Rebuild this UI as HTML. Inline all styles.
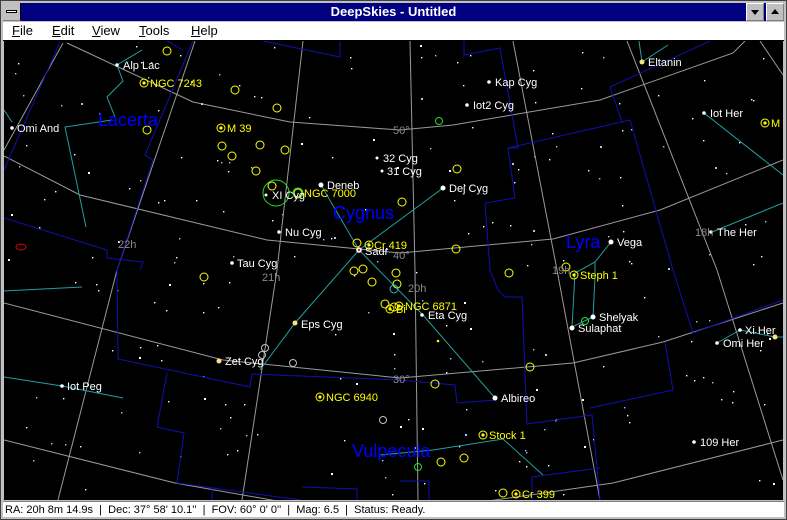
<!DOCTYPE html>
<html><head><meta charset="utf-8"><style>
*{margin:0;padding:0}
body{width:787px;height:520px;overflow:hidden;background:#c0c0c0;font-family:"Liberation Sans",Arial,sans-serif;position:relative}
#title{position:absolute;left:3px;top:3px;width:781px;height:18px;background:#000080;color:#fff;font-weight:bold;font-size:13px;text-align:center;line-height:18px}
.btn{position:absolute;top:3px;width:18px;height:18px;background:#c0c0c0;border-right:1px solid #808080;border-bottom:1px solid #808080;box-sizing:border-box}
#menu{position:absolute;left:3px;top:22px;width:781px;height:18px;background:#fff;border-bottom:1px solid #000;font-size:13px;line-height:18px}
#menu span{position:absolute;top:0}
#menu u{text-decoration:underline}
#status{position:absolute;left:3px;top:501px;width:781px;height:16px;background:#fff;font-size:11px;line-height:16px;padding-left:2px;box-sizing:border-box;border-top:1px solid #808080}
svg{position:absolute;left:0;top:0}
</style></head><body>
<div style="position:absolute;left:0;top:0;width:787px;height:520px;border:1px solid #404040;box-sizing:border-box"></div>
<div id="title">DeepSkies - Untitled</div>
<div class="btn" style="left:3px;border-right:1px solid #000"><div style="position:absolute;left:3px;top:7px;width:11px;height:3px;background:#fff;border:1px solid #000;box-sizing:border-box"></div></div>
<div class="btn" style="left:746px;border-left:1px solid #fff;border-top:1px solid #fff"><div style="position:absolute;left:4px;top:6px;width:0;height:0;border-left:4px solid transparent;border-right:4px solid transparent;border-top:5px solid #000"></div></div>
<div class="btn" style="left:766px;border-left:1px solid #fff;border-top:1px solid #fff"><div style="position:absolute;left:4px;top:5px;width:0;height:0;border-left:4px solid transparent;border-right:4px solid transparent;border-bottom:5px solid #000"></div></div>
<div id="menu"><span style="left:9px"><u>F</u>ile</span><span style="left:49px"><u>E</u>dit</span><span style="left:89px"><u>V</u>iew</span><span style="left:136px"><u>T</u>ools</span><span style="left:188px"><u>H</u>elp</span></div>
<svg width="787" height="520" viewBox="0 0 787 520" xmlns="http://www.w3.org/2000/svg" font-family="Liberation Sans, Arial, sans-serif">
<defs><clipPath id="c"><rect x="4" y="41" width="779" height="459"/></clipPath></defs>
<g clip-path="url(#c)">
<rect x="4" y="41" width="779" height="459" fill="#000"/>
<g id="stars"></g>
<g fill="none" stroke="#9a9a9a" stroke-width="1">
<polyline points="67,43 193,102 290,122 400,130 453,125 600,100 733,53 745,41"/>
<polyline points="4,156 80,195 267,240 400,253 553,239 660,210 783,160"/>
<polyline points="4,303 223,360 400,378 573,363 663,342 783,303"/>
<polyline points="4,440 175,483 300,505"/>
<polyline points="460,505 613,483 783,440"/>
<polyline points="195,41 117,270 58,500"/>
<polyline points="303,41 277,270 242,500"/>
<polyline points="410,41 415,270 418,500"/>
<polyline points="513,41 557,270 600,500"/>
<polyline points="627,41 717,270 783,480"/>
<polyline points="760,41 783,75"/>
<polyline points="63,43 4,150"/>
</g>
<g fill="none" stroke="#1010b0" stroke-width="1">
<polyline points="193,41 145,155 153,160 117,270 118,359 250,387 252,374 400,380 455,385 457,403 497,400"/>
<polyline points="60,42 4,170"/>
<polyline points="4,218 107,250 107,258 143,262 140,270"/>
<polyline points="167,41 183,50"/>
<polyline points="263,41 340,57 340,41"/>
<polyline points="464,41 464,55 500,48 518,148 508,148 515,198 485,203 490,270 498,290 505,297 522,297 527,424 592,415 600,500"/>
<polyline points="508,148 630,120 673,270 693,333 783,300"/>
<polyline points="610,87 622,122"/>
<polyline points="610,87 710,41"/>
<polyline points="665,342 673,390 590,408"/>
<polyline points="167,373 157,427 184,433 177,483 300,500"/>
<polyline points="212,488 212,500"/>
<polyline points="302,487 357,489 357,500"/>
<polyline points="400,481 429,481 429,500"/>
<polyline points="532,500 532,477 600,468"/>
</g>
<g fill="none" stroke="#20a0a0" stroke-width="1">
<polyline points="142,50 117,65 123,81 107,97 115,117"/>
<polyline points="112,120 65,127 86,227"/>
<polyline points="4,110 12,122"/>
<polyline points="321,185 359,250 423,315 495,398"/>
<polyline points="443,188 359,250 295,323 260,370"/>
<polyline points="433,450 503,439 543,475"/>
<polyline points="433,450 380,455"/>
<polyline points="611,242 595,262 575,273 572,327"/>
<polyline points="595,262 595,277 593,317 572,327"/>
<polyline points="704,113 783,175"/>
<polyline points="642,62 668,45"/>
<polyline points="639,41 642,62"/>
<polyline points="712,232 783,203"/>
<polyline points="717,343 740,330 775,337 783,337"/>
<polyline points="4,291 82,287"/>
<polyline points="4,377 62,386 123,398"/>
</g>
<g fill="none" stroke="#ffff00" stroke-width="1">
<circle cx="167" cy="51" r="4"/><circle cx="235" cy="90" r="4"/><circle cx="277" cy="108" r="4"/><circle cx="147" cy="130" r="4"/><circle cx="260" cy="145" r="4"/><circle cx="222" cy="146" r="4"/><circle cx="232" cy="156" r="4"/><circle cx="285" cy="150" r="4"/><circle cx="256" cy="171" r="4"/><circle cx="272" cy="186" r="4"/><circle cx="457" cy="169" r="4"/><circle cx="402" cy="202" r="4"/><circle cx="456" cy="249" r="4"/><circle cx="357" cy="243" r="4"/><circle cx="354" cy="271" r="4"/><circle cx="363" cy="269" r="4"/><circle cx="372" cy="282" r="4"/><circle cx="396" cy="273" r="4"/><circle cx="397" cy="284" r="4"/><circle cx="509" cy="273" r="4"/><circle cx="204" cy="277" r="4"/><circle cx="566" cy="267" r="4"/><circle cx="435" cy="384" r="4"/><circle cx="441" cy="462" r="4"/><circle cx="464" cy="458" r="4"/><circle cx="503" cy="493" r="4"/><circle cx="385" cy="304" r="4"/><circle cx="394" cy="307" r="4"/><circle cx="455" cy="179" r="0"/>
<circle cx="144" cy="83" r="4"/><circle cx="221" cy="128" r="4"/><circle cx="298" cy="193" r="4"/><circle cx="369" cy="245" r="4"/><circle cx="574" cy="275" r="4"/><circle cx="399" cy="306" r="4"/><circle cx="390" cy="309" r="4"/><circle cx="320" cy="397" r="4"/><circle cx="483" cy="435" r="4"/><circle cx="516" cy="494" r="4"/><circle cx="765" cy="123" r="4"/><circle cx="530" cy="367" r="4"/>
</g>
<g fill="#ffff00"><circle cx="144" cy="83" r="1.6"/><circle cx="221" cy="128" r="1.6"/><circle cx="369" cy="245" r="1.6"/><circle cx="574" cy="275" r="1.6"/><circle cx="399" cy="306" r="1.6"/><circle cx="390" cy="309" r="1.6"/><circle cx="320" cy="397" r="1.6"/><circle cx="483" cy="435" r="1.6"/><circle cx="516" cy="494" r="1.6"/><circle cx="765" cy="123" r="1.6"/><circle cx="438" cy="341" r="1.3"/></g>
<g fill="none" stroke="#20e020"><circle cx="276" cy="193" r="13"/><circle cx="298" cy="193" r="5"/><circle cx="439" cy="121" r="3.5"/><circle cx="585" cy="321" r="3.5"/><circle cx="418" cy="467" r="3.5"/></g>
<g fill="none" stroke="#20c0d0"><circle cx="394" cy="289" r="4"/></g>
<g fill="none" stroke="#c0c0c0"><circle cx="265" cy="348" r="3.5"/><circle cx="262" cy="355" r="3.5"/><circle cx="293" cy="363" r="3.5"/><circle cx="383" cy="420" r="3.5"/></g>
<ellipse cx="21" cy="247" rx="5" ry="3" fill="none" stroke="#e00000"/>
<g fill="#fff">
<circle cx="117" cy="65" r="1.8"/><circle cx="12" cy="128" r="1.8"/><circle cx="377" cy="158" r="1.5"/><circle cx="382" cy="171" r="1.5"/><circle cx="321" cy="185" r="2.5"/><circle cx="266" cy="195" r="1.5"/><circle cx="443" cy="188" r="2.5"/><circle cx="279" cy="232" r="1.8"/><circle cx="232" cy="263" r="1.8"/><circle cx="611" cy="242" r="2.5"/><circle cx="593" cy="317" r="2.5"/><circle cx="572" cy="328" r="2.5"/><circle cx="422" cy="315" r="1.8"/><circle cx="495" cy="398" r="2.5"/><circle cx="489" cy="82" r="1.8"/><circle cx="467" cy="105" r="1.8"/><circle cx="704" cy="113" r="1.8"/><circle cx="711" cy="232" r="1.8"/><circle cx="740" cy="330" r="1.8"/><circle cx="717" cy="343" r="1.8"/><circle cx="694" cy="442" r="1.8"/><circle cx="62" cy="386" r="1.8"/>
</g>
<g fill="#ffe080"><circle cx="642" cy="62" r="2.5"/><circle cx="295" cy="323" r="2.5"/><circle cx="219" cy="361" r="2.5"/><circle cx="775" cy="337" r="2.5"/></g>
<circle cx="359" cy="250" r="2.8" fill="#fff"/><circle cx="359" cy="250" r="1.2" fill="#e02020"/>
<g fill="#fff" font-size="11">
<text x="123" y="69">Alp Lac</text><text x="17" y="132">Omi And</text><text x="383" y="162">32 Cyg</text><text x="387" y="175">31 Cyg</text><text x="327" y="189">Deneb</text><text x="272" y="199">XI Cyg</text><text x="449" y="192">Dej Cyg</text><text x="285" y="236">Nu Cyg</text><text x="365" y="255">Sadr</text><text x="237" y="267">Tau Cyg</text><text x="617" y="246">Vega</text><text x="599" y="321">Shelyak</text><text x="578" y="332">Sulaphat</text><text x="428" y="319">Eta Cyg</text><text x="301" y="328">Eps Cyg</text><text x="225" y="365">Zet Cyg</text><text x="67" y="390">Iot Peg</text><text x="501" y="402">Albireo</text><text x="495" y="86">Kap Cyg</text><text x="473" y="109">Iot2 Cyg</text><text x="648" y="66">Eltanin</text><text x="710" y="117">Iot Her</text><text x="717" y="236">The Her</text><text x="745" y="334">Xi Her</text><text x="723" y="347">Omi Her</text><text x="700" y="446">109 Her</text>
</g>
<g fill="#ffff00" font-size="11">
<text x="150" y="87">NGC 7243</text><text x="227" y="132">M 39</text><text x="304" y="197">NGC 7000</text><text x="374" y="249">Cr 419</text><text x="580" y="279">Steph 1</text><text x="405" y="310">NGC 6871</text><text x="396" y="313">Bi</text><text x="326" y="401">NGC 6940</text><text x="489" y="439">Stock 1</text><text x="522" y="498">Cr 399</text><text x="771" y="127">M 5</text>
</g>
<g fill="#8a8a8a" font-size="11">
<text x="393" y="134">50°</text><text x="393" y="259">40°</text><text x="393" y="383">30°</text><text x="393" y="508">20°</text><text x="118" y="248">22h</text><text x="262" y="281">21h</text><text x="408" y="292">20h</text><text x="552" y="274">19h</text><text x="695" y="236">18h</text>
</g>
<g fill="#0000ff" font-size="18">
<text x="98" y="126">Lacerta</text><text x="333" y="219">Cygnus</text><text x="566" y="248">Lyra</text><text x="352" y="457">Vulpecula</text>
</g>
</g>
</svg>
<div id="status">RA: 20h 8m 14.9s &nbsp;| &nbsp;Dec: 37° 58' 10.1'' &nbsp;| &nbsp;FOV: 60° 0' 0'' &nbsp;| &nbsp;Mag: 6.5 &nbsp;| &nbsp;Status: Ready.</div>
<script>
(function(){var g=document.getElementById('stars'),s=12345,h='';function r(){s=(s*1103515245+12345)%2147483648;return s/2147483648;}
for(var i=0;i<230;i++){var x=6+r()*776,y=43+r()*455,c=r()<0.35?'#a0c8ff':'#ffffff',sz=r()<0.15?2:1.4;h+='<rect x="'+x.toFixed(0)+'" y="'+y.toFixed(0)+'" width="'+sz+'" height="'+sz+'" fill="'+c+'"/>';}
g.innerHTML=h;})();
</script>
</body></html>
